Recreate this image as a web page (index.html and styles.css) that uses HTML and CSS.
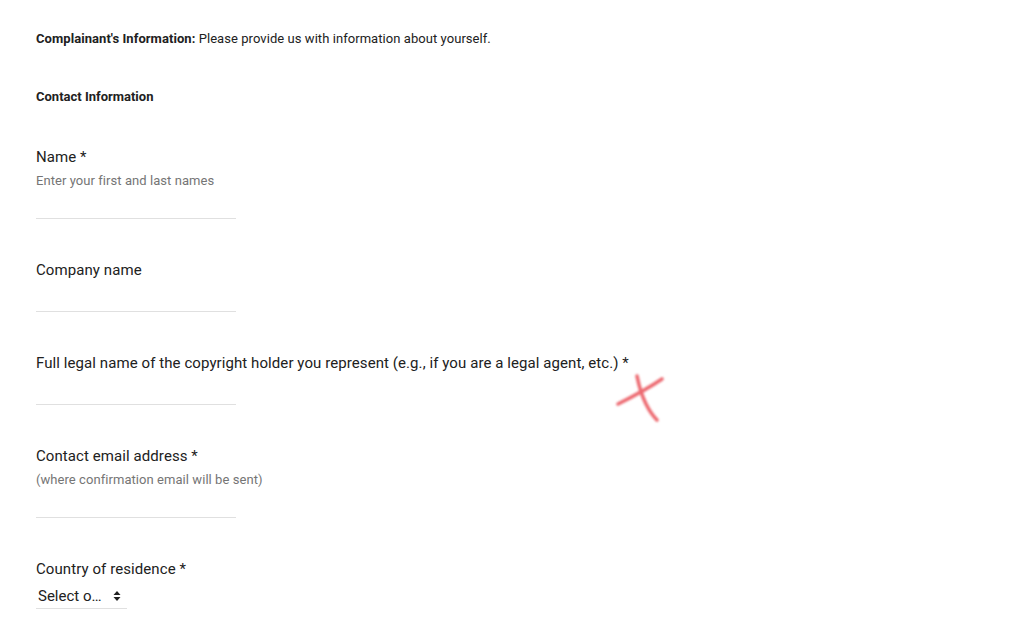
FILE: index.html
```html
<!DOCTYPE html>
<html>
<head>
    <title>Complainant's Information</title>
    <meta name="viewport" content="width=device-width, initial-scale=1.0">
    <link rel="stylesheet" href="styles.css">
</head>
<body>
    <div class="page">
        <div class="intro">
            <b>Complainant's Information:</b> Please provide us with information about yourself.
        </div>

        <div class="section-title">Contact Information</div>

        <div class="field">
            <label class="label">Name *</label>
            <div class="hint">Enter your first and last names</div>
            <input class="text-input" type="text">
        </div>

        <div class="field">
            <label class="label">Company name</label>
            <input class="text-input" type="text">
        </div>

        <div class="field">
            <label class="label">Full legal name of the copyright holder you represent (e.g., if you are a legal agent, etc.) *</label>
            <input class="text-input" type="text">
        </div>

        <div class="field">
            <label class="label">Contact email address *</label>
            <div class="hint">(where confirmation email will be sent)</div>
            <input class="text-input" type="email">
        </div>

        <div class="field">
            <label class="label">Country of residence *</label>
            <div class="select-wrap">
                <select class="select">
                    <option>Select o…</option>
                </select>
                <svg class="select-arrows" width="8" height="12" viewBox="0 0 8 12">
                    <path d="M4 1 L7.5 5 L0.5 5 Z" fill="#212121"/>
                    <path d="M4 11 L7.5 7 L0.5 7 Z" fill="#212121"/>
                </svg>
            </div>
        </div>

        <!-- hand-drawn red mark over the form -->
        <svg class="mark" width="60" height="56" viewBox="0 0 60 56">
            <defs>
                <filter id="soft" x="-20%" y="-20%" width="140%" height="140%">
                    <feGaussianBlur stdDeviation="0.8"/>
                </filter>
            </defs>
            <g filter="url(#soft)" stroke="#e8454d" stroke-width="3.6" stroke-linecap="round" fill="none" opacity="0.8">
                <path d="M6 32 C 18 26, 34 18, 50 7"/>
                <path d="M25 4 C 27 14, 30 24, 34 32 C 38 40, 42 45, 45 48"/>
            </g>
        </svg>
    </div>
</body>
</html>
```

FILE: styles.css
```css
* { box-sizing: border-box; }

body {
    margin: 0;
    background: #fff;
    color: #212121;
    font-family: Roboto, "Liberation Sans", Arial, sans-serif;
}

.page {
    position: relative;
    padding: 31px 36px 20px;
}

.intro {
    font-size: 13px;
    line-height: 16px;
    letter-spacing: 0.06px;
    margin-bottom: 42px;
}

.intro b {
    font-weight: bold;
}

.section-title {
    font-size: 13px;
    line-height: 16px;
    font-weight: bold;
    margin-bottom: 41px;
}

.field {
    margin-bottom: 40px;
}

.label {
    display: block;
    padding-top: 1px;
    font-size: 15px;
    line-height: 20px;
    letter-spacing: 0.08px;
}

.hint {
    font-size: 13px;
    line-height: 14px;
    letter-spacing: 0.06px;
    color: #757575;
    margin-top: 7px;
    margin-bottom: -1px;
}

.text-input {
    display: block;
    width: 200px;
    height: 32px;
    border: none;
    border-bottom: 1px solid #e0e0e0;
    padding: 0;
    outline: none;
    font: inherit;
    background: transparent;
}

.select-wrap {
    position: relative;
    display: inline-block;
    margin-top: 4px;
}

.select {
    -webkit-appearance: none;
    appearance: none;
    width: 91px;
    height: 26px;
    border: none;
    border-bottom: 1px solid #e0e0e0;
    border-radius: 0;
    background: transparent;
    padding: 1px 0 0 2px;
    font-family: inherit;
    font-size: 15px;
    color: #212121;
    outline: none;
}

.select-arrows {
    position: absolute;
    left: 77px;
    top: 7px;
    pointer-events: none;
}

.mark {
    position: absolute;
    left: 612px;
    top: 372px;
}
```
